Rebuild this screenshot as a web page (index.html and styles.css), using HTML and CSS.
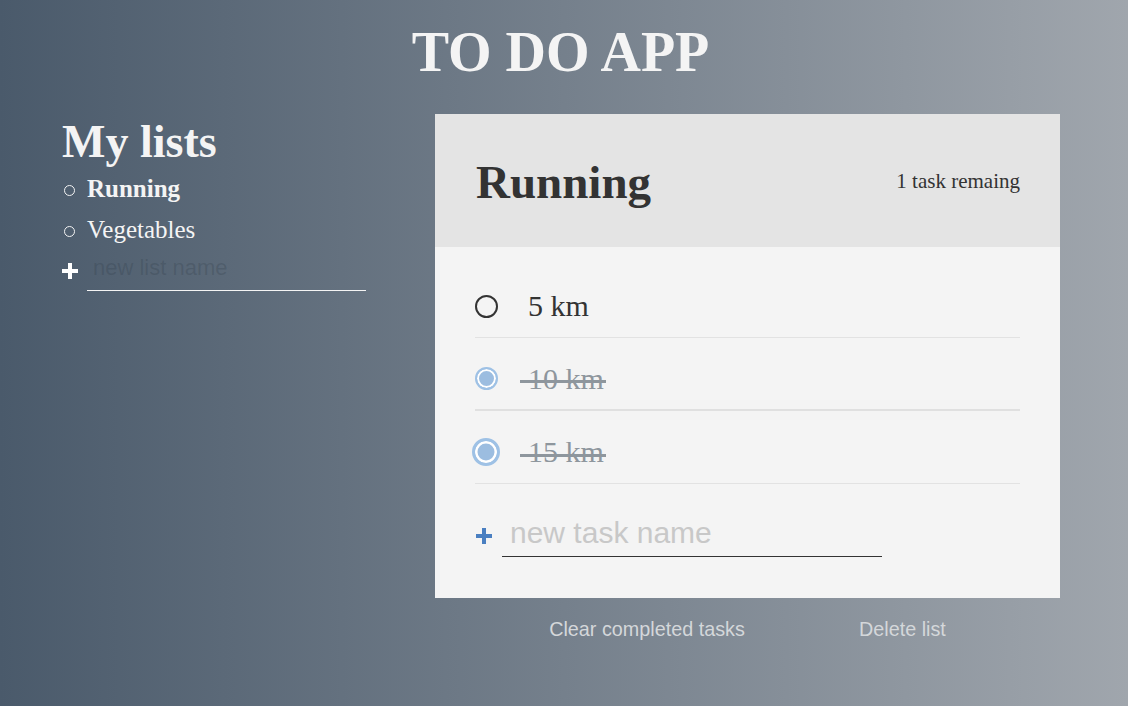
FILE: index.html
```html
<!DOCTYPE html>
<html lang="en">
<head>
<meta charset="utf-8">
<title>To Do App</title>
<link rel="stylesheet" href="styles.css">
</head>
<body>
<h1 class="title">TO DO APP</h1>
<div class="layout">
  <aside class="sidebar">
    <h2 class="sidebar-title">My lists</h2>
    <ul class="lists">
      <li class="list-item active">Running</li>
      <li class="list-item">Vegetables</li>
    </ul>
    <form class="new-list">
      <svg class="plus plus-white" width="16" height="16" viewBox="0 0 16 16"><path d="M6 0h4v6h6v4h-6v6H6v-6H0V6h6z" fill="#ffffff"/></svg>
      <input class="new-list-input" type="text" placeholder="new list name">
    </form>
  </aside>
  <main class="column">
    <section class="card">
      <header class="card-header">
        <h2 class="card-title">Running</h2>
        <p class="count">1 task remaing</p>
      </header>
      <div class="card-body">
        <div class="task">
          <span class="check"></span>
          <span class="task-name">5 km</span>
        </div>
        <div class="task task-hover">
          <span class="check checked"></span>
          <span class="task-name done">10 km</span>
        </div>
        <div class="task">
          <span class="check checked big"></span>
          <span class="task-name done">15 km</span>
        </div>
        <form class="new-task">
          <svg class="plus plus-blue" width="16" height="16" viewBox="0 0 16 16"><path d="M6 0h4v6h6v4h-6v6H6v-6H0V6h6z" fill="#4a7fc1"/></svg>
          <input class="new-task-input" type="text" placeholder="new task name">
        </form>
      </div>
    </section>
    <div class="actions">
      <button class="btn" type="button">Clear completed tasks</button>
      <button class="btn" type="button">Delete list</button>
    </div>
  </main>
</div>
</body>
</html>
```

FILE: styles.css
```css
* { box-sizing: border-box; }

html, body { height: 100%; }

body {
  margin: 0;
  min-height: 100vh;
  background: linear-gradient(to right, #4a5a6b 0%, #75808c 50%, #a0a6ad 100%);
  font-family: "Liberation Serif", "DejaVu Serif", serif;
  color: #f4f4f4;
  overflow: hidden;
}

.title {
  margin: 0;
  padding: 19px 7px 0 0;
  font-size: 56px;
  line-height: 66px;
  font-weight: 700;
  text-align: center;
  color: #f4f4f4;
}

.layout {
  display: grid;
  grid-template-columns: 373px 625px;
  padding-left: 62px;
  margin-top: 29px;
}

.sidebar { padding-top: 3px; }

.sidebar-title {
  margin: 0;
  font-size: 46px;
  line-height: 50px;
  font-weight: 700;
}

.lists {
  list-style: none;
  margin: 1px 0 0;
  padding: 0;
}

.list-item {
  display: flex;
  align-items: center;
  gap: 12px;
  font-size: 25px;
  line-height: 41px;
  padding-left: 2px;
}

.list-item::before {
  content: "";
  width: 9px;
  height: 9px;
  border: 1.5px solid #f4f4f4;
  border-radius: 50%;
  margin-top: 3px;
}

.list-item.active { font-weight: 700; }

.new-list {
  display: flex;
  align-items: center;
  gap: 9px;
  width: 304px;
}

.plus { flex: none; }

.plus-white { width: 16px; height: 16px; }

.new-list-input {
  width: 279px;
  flex: none;
  height: 41px;
  border: 0;
  border-bottom: 1px solid #f4f4f4;
  background: transparent;
  padding: 0 0 4px 6px;
  font-family: "Liberation Sans", Arial, sans-serif;
  font-size: 22px;
  color: #f4f4f4;
  outline: none;
}

.new-list-input::placeholder { color: rgba(40, 52, 64, 0.22); }

.column { display: flex; flex-direction: column; }

.card { background: #f4f4f4; color: #333333; }

.card-header {
  height: 133px;
  background: #e4e4e4;
  padding: 0 40px 0 41px;
  display: flex;
  align-items: center;
  justify-content: space-between;
}

.card-title {
  margin: 4px 0 0;
  font-size: 47px;
  line-height: 1;
  font-weight: 700;
  color: #333333;
}

.count {
  margin: 2px 0 0;
  font-size: 21px;
  color: #333333;
}

.card-body { padding: 18px 40px 41px; }

.task {
  height: 73px;
  padding-top: 10px;
  display: flex;
  align-items: center;
  border-bottom: 1px solid #e2e2e2;
}

.task-hover { border-bottom: 2px solid #e0e0e0; }

.check {
  flex: none;
  width: 23px;
  height: 23px;
  border-radius: 50%;
  border: 2px solid #333333;
  margin-right: 30px;
}

.check.checked {
  border: 2px solid #9ec1e5;
  background: #9cbde0;
  box-shadow: inset 0 0 0 2px #ffffff;
}

.check.big {
  width: 28px;
  height: 28px;
  margin-left: -3px;
  margin-right: 28px;
  border-width: 3px;
  box-shadow: inset 0 0 0 2.5px #ffffff;
}

.task-name {
  position: relative;
  font-size: 30px;
  color: #333333;
}

.task-name.done { color: #8e969d; }

.task-name.done::after {
  content: "";
  position: absolute;
  left: -8px;
  right: -2px;
  top: 55%;
  height: 3px;
  background: #8e969d;
}

.new-task {
  display: flex;
  align-items: center;
  margin-top: 28px;
  gap: 10px;
}

.plus-blue { width: 16px; height: 16px; margin-left: 1px; margin-top: 3px; }

.new-task-input {
  width: 380px;
  height: 45px;
  border: 0;
  border-bottom: 1px solid #333333;
  background: transparent;
  padding: 0 0 2px 8px;
  font-family: "Liberation Sans", Arial, sans-serif;
  font-size: 30px;
  color: #333333;
  outline: none;
}

.new-task-input::placeholder { color: #c8c8c8; }

.actions {
  display: flex;
  justify-content: space-evenly;
  margin-top: 20px;
}

.btn {
  border: 0;
  background: none;
  padding: 0;
  font-family: "Liberation Sans", Arial, sans-serif;
  font-size: 19.8px;
  line-height: 22px;
  color: #d4d7da;
  cursor: pointer;
}
```
